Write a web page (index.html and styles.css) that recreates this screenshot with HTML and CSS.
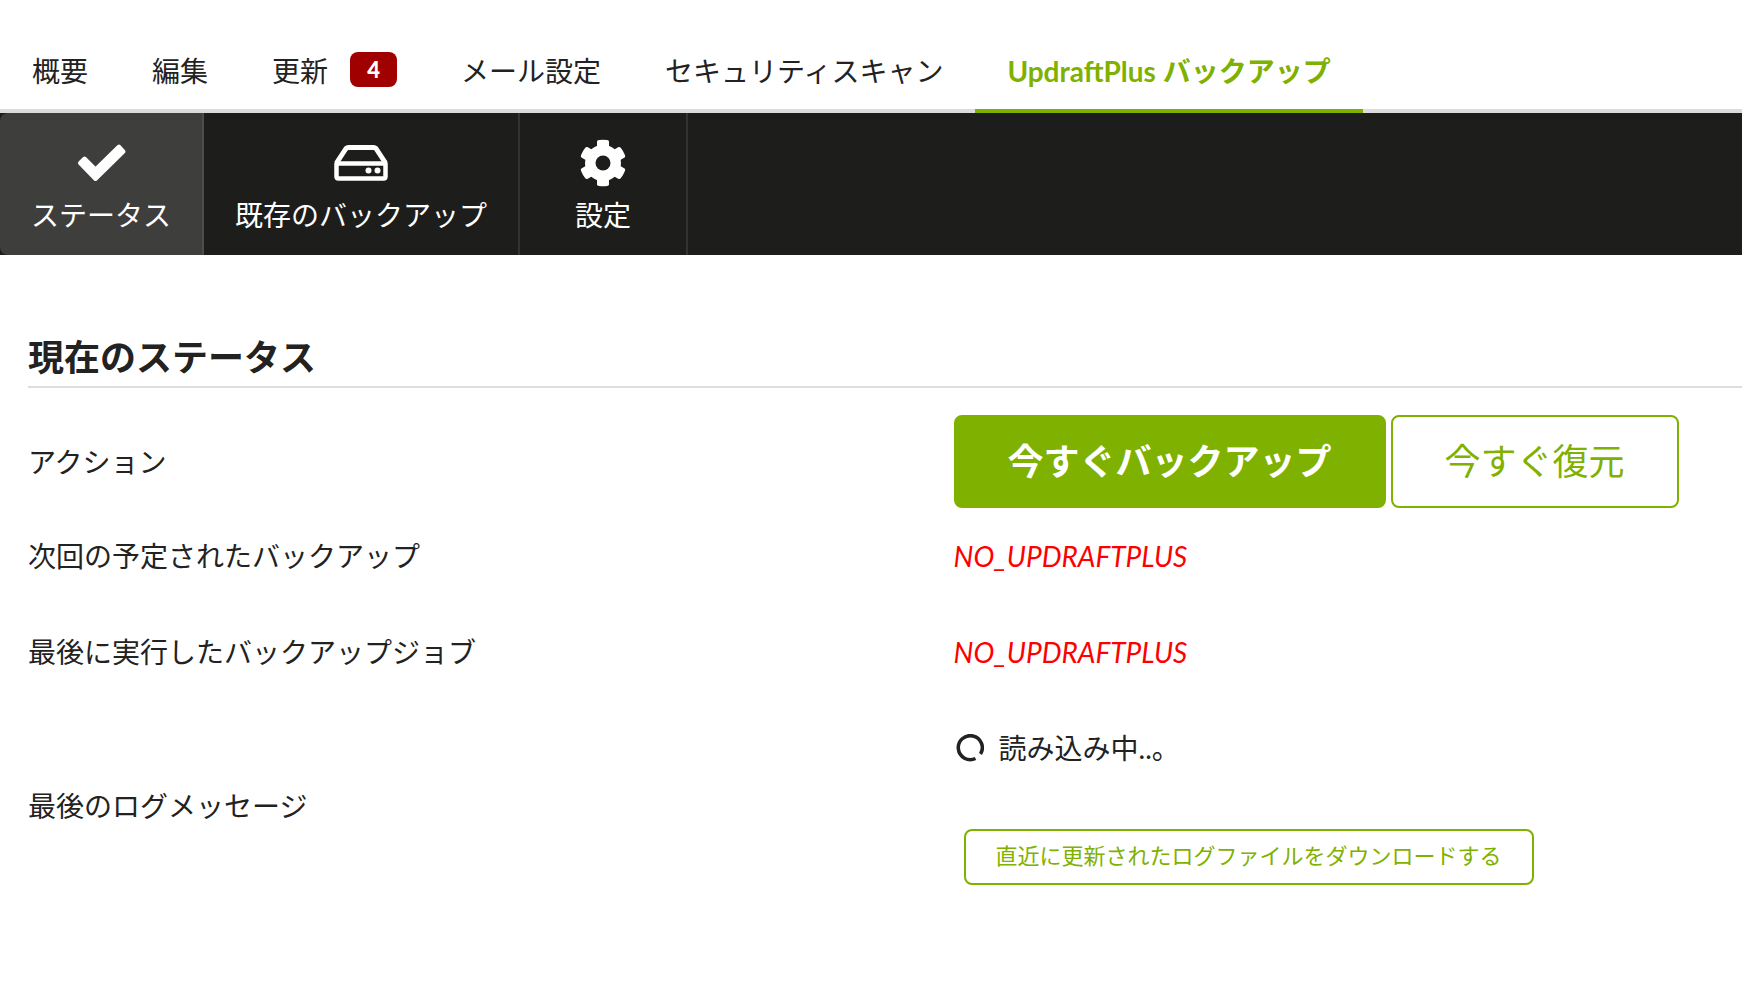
FILE: index.html
```html
<!DOCTYPE html>
<html lang="ja">

<head>
    <meta charset="UTF-8">
    <meta name="viewport" content="width=device-width, initial-scale=1.0">
    <title>UpdraftPlus バックアップ</title>
    <link rel="stylesheet" href="styles.css">
</head>

<body>

    <nav class="tabs">
        <a class="tab" href="#overview">概要</a>
        <a class="tab" href="#edit">編集</a>
        <a class="tab" href="#updates">更新<span class="badge">4</span></a>
        <a class="tab" href="#mail">メール設定</a>
        <a class="tab" href="#scan">セキュリティスキャン</a>
        <a class="tab active" href="#backup">UpdraftPlus バックアップ</a>
    </nav>

    <nav class="toolbar">
        <a class="tool active" href="#status">
            <svg class="icon" viewBox="0 0 56 48">
                <path d="M7 24 11.500 19.500 22.500 30.500 46 7.500 50.500 12.500 22.500 40Z" fill="#fff" stroke="#fff" stroke-width="4" stroke-linejoin="round" />
            </svg>
            <span>ステータス</span>
        </a>
        <a class="tool" href="#existing">
            <svg class="icon" viewBox="0 0 56 48" fill="none" stroke="#fff" stroke-width="5" stroke-linejoin="round">
                <path d="M3.500 24 13 9.500Q14 8.500 15.500 8.500H40.500Q42 8.500 43 9.500L52.500 24" />
                <path d="M3.500 24.500H52.500V37.500Q52.500 39.500 50.500 39.500H5.500Q3.500 39.500 3.500 37.500Z" stroke-width="4.500" />
                <circle cx="35.500" cy="31.500" r="3" fill="#fff" stroke="none" />
                <circle cx="44.500" cy="31.500" r="3" fill="#fff" stroke="none" />
            </svg>
            <span>既存のバックアップ</span>
        </a>
        <a class="tool" href="#settings">
            <svg class="icon" viewBox="0 0 56 48" fill="#fff">
                <circle cx="28" cy="24" r="18" />
                <path id="tooth" d="M22 2.500Q22 1.300 24 1Q28 .4 32 1Q34 1.300 34 2.500V9H22Z" />
                <use href="#tooth" transform="rotate(60 28 24)" />
                <use href="#tooth" transform="rotate(120 28 24)" />
                <use href="#tooth" transform="rotate(180 28 24)" />
                <use href="#tooth" transform="rotate(240 28 24)" />
                <use href="#tooth" transform="rotate(300 28 24)" />
                <circle cx="28" cy="24" r="7.500" fill="#1d1d1b" />
            </svg>
            <span>設定</span>
        </a>
    </nav>

    <main>
        <h2>現在のステータス</h2>

        <table class="status">
            <tr>
                <th scope="row">アクション</th>
                <td>
                    <div class="actions">
                        <button type="button" class="btn primary">今すぐバックアップ</button>
                        <button type="button" class="btn">今すぐ復元</button>
                    </div>
                </td>
            </tr>
            <tr>
                <th scope="row">次回の予定されたバックアップ</th>
                <td class="missing">NO_UPDRAFTPLUS</td>
            </tr>
            <tr>
                <th scope="row">最後に実行したバックアップジョブ</th>
                <td class="missing">NO_UPDRAFTPLUS</td>
            </tr>
            <tr>
                <th scope="row">最後のログメッセージ</th>
                <td>
                    <div class="loading">
                        <svg class="spinner" viewBox="0 0 28 28" fill="none" stroke="#222" stroke-width="3.500">
                            <path d="M19.500 24.500A12 12 0 1 1 24.500 20" />
                        </svg>
                        <span>読み込み中..。</span>
                    </div>
                    <button type="button" class="btn small">直近に更新されたログファイルをダウンロードする</button>
                </td>
            </tr>
        </table>
    </main>

</body>

</html>
```
FILE: styles.css
```css
* {
    box-sizing: border-box;
}

body {
    margin: 0;
    background-color: #fff;
    color: #222;
    font-family: Lato, "Noto Sans CJK JP", sans-serif;
    font-size: 28px;
    line-height: 40px;
}

/* Верхние вкладки */
.tabs {
    display: flex;
    align-items: flex-end;
    padding-top: 31px;
    box-shadow: inset 0 -4px #dcdcdc;
}

.tab {
    padding: 20px 32px 18px;
    border-bottom: 4px solid transparent;
    color: #222;
    text-decoration: none;
    white-space: nowrap;
}

.tab.active {
    border-color: #7fb100;
    color: #7fb100;
    font-weight: bold;
}

.badge {
    display: inline-block;
    width: 47px;
    margin-left: 22px;
    border-radius: 8px;
    background-color: #a00000;
    color: #fff;
    font-size: 22px;
    font-weight: 900;
    line-height: 35px;
    text-align: center;
    vertical-align: 4px;
}

/* Панель с иконками */
.toolbar {
    display: flex;
    background-color: #1d1d1b;
}

.tool {
    display: flex;
    flex-direction: column;
    align-items: center;
    gap: 8px;
    min-width: 168px;
    padding: 26px 31px 20px;
    border-right: 2px solid #333;
    color: #fff;
    text-decoration: none;
    white-space: nowrap;
}

.tool.active {
    border-color: #4d4d4b;
    border-radius: 8px 0 0 8px;
    background-color: #3e3e3c;
}

.icon {
    width: 56px;
    height: 48px;
}

/* Содержимое */
main {
    padding: 76px 0 0 28px;
}

h2 {
    margin: 0;
    padding-bottom: 3px;
    border-bottom: 2px solid #dedede;
    font-size: 36px;
    line-height: 52px;
}

.status {
    width: 100%;
    margin-top: 27px;
    border-collapse: collapse;
}

.status th,
.status td {
    height: 96px;
    padding: 0;
    text-align: left;
    vertical-align: middle;
}

.status tr:first-child th,
.status tr:first-child td {
    height: 93px;
}

.status th {
    width: 54%;
    font-weight: normal;
}

.status .missing {
    color: #f00;
    font-style: italic;
}

.actions {
    display: flex;
    gap: 5px;
}

.btn {
    padding: 19px 52px;
    border: 2px solid #7fb100;
    border-radius: 8px;
    background-color: #fff;
    color: #7fb100;
    font-family: inherit;
    font-size: 36px;
    line-height: 51px;
    white-space: nowrap;
    cursor: pointer;
}

.btn.primary {
    background-color: #7fb100;
    color: #fff;
    font-weight: bold;
}

.btn.small {
    margin: 0 10px 26px;
    padding: 9px 30px 11px;
    font-size: 22px;
    line-height: 32px;
}

.loading {
    display: flex;
    align-items: center;
    gap: 15px;
    padding: 28px 2px 61px;
}

.spinner {
    width: 28px;
    height: 28px;
}
```
